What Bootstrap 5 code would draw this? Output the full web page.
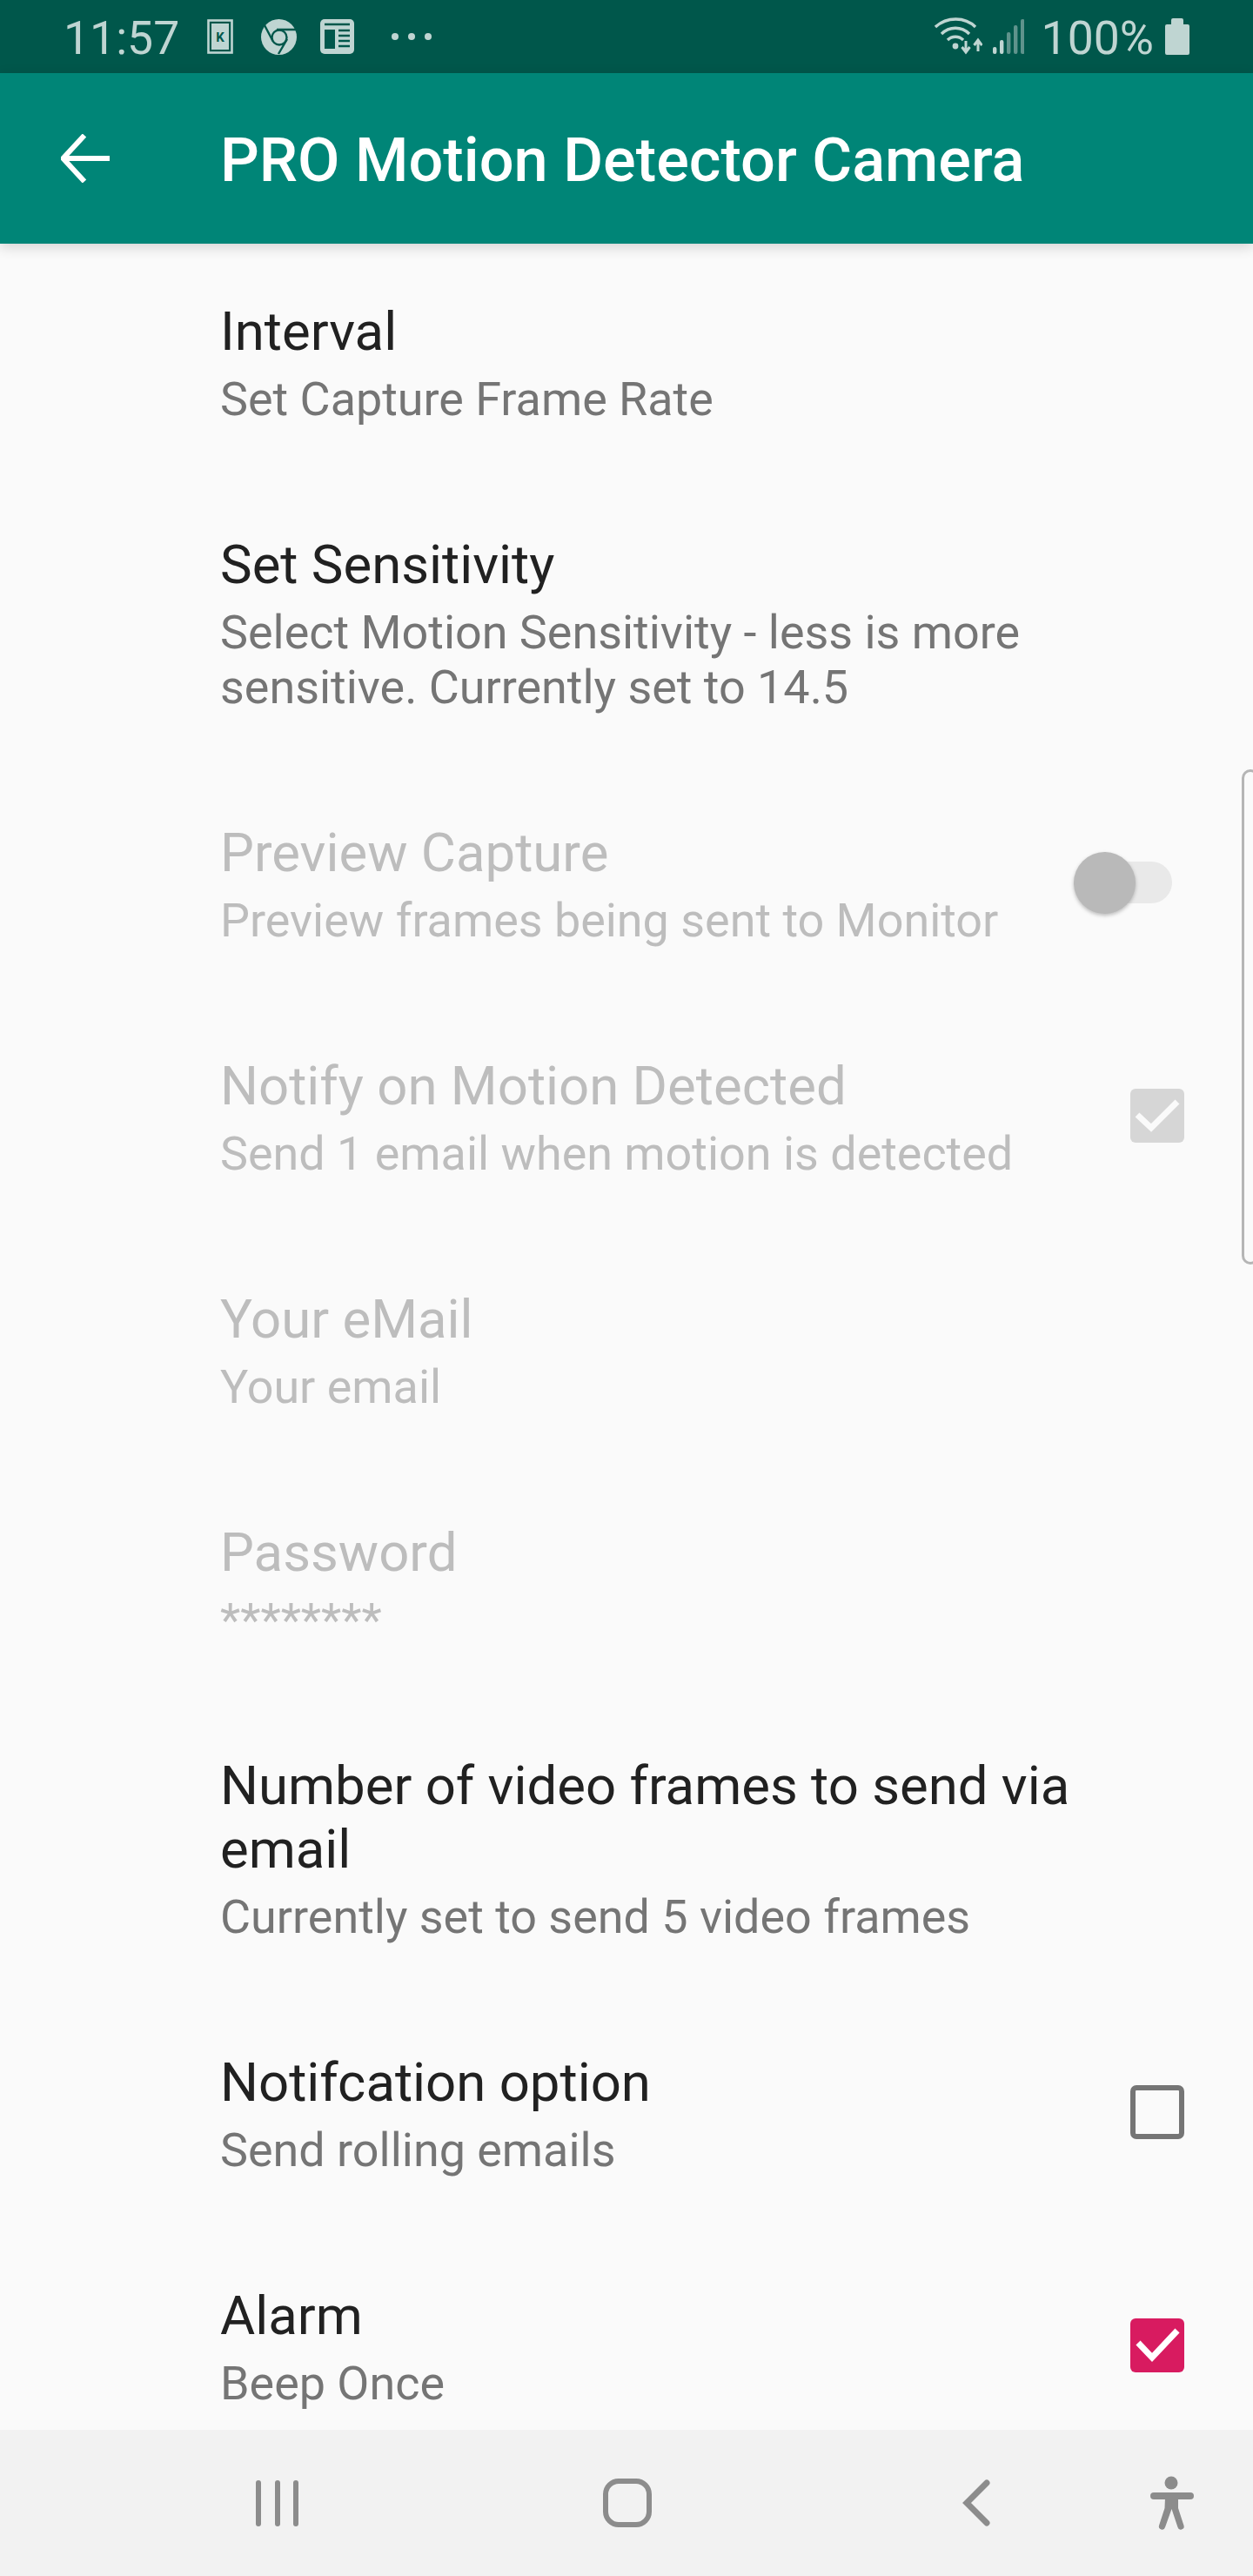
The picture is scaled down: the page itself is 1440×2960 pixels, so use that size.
<!DOCTYPE html>
<html lang="en">
<head>
    <meta charset="UTF-8">
    <title>PRO Motion Detector Camera</title>
    <link href="https://cdn.jsdelivr.net/npm/bootstrap@5.3.2/dist/css/bootstrap.min.css" rel="stylesheet">
    <style>
        body {
          background-color: #fafafa;
          font-family: Roboto, "Liberation Sans", sans-serif;
        }
        .phone-screen {
          height: 2960px;
        }
        .status-strip {
          height: 84px;
          background-color: #00574b;
          color: #bfd5d2;
          font-size: 53.5px;
          line-height: 84px;
          padding: 0 73px 0 73px;
        }
        .status-text {
          padding-top: 3px;
        }
        .status-k {
          margin-left: 32px;
        }
        .status-chrome {
          margin-left: 32px;
        }
        .status-news {
          margin-left: 27px;
        }
        .status-dots {
          margin-left: 42px;
        }
        .status-signal {
          margin-left: 12px;
          margin-right: 20px;
        }
        .status-battery {
          margin-left: 13px;
        }
        .app-strip {
          height: 196px;
          background-color: #008577;
          color: #fff;
          padding-left: 70px;
          box-shadow: 0 4px 14px rgba(0, 0, 0, .16);
          z-index: 2;
        }
        .app-name {
          font-size: 70.3px;
          font-weight: 500;
          line-height: 1;
          margin: 5px 0 0 127px;
        }
        .pref-scroll {
          height: 2512px;
          overflow: hidden;
          padding-top: 2px;
        }
        .pref-row {
          background: transparent;
          border: 0;
          padding: 63px 79px 60px 253px;
          border-radius: 0 !important;
        }
        .pref-text {
          width: 990px;
        }
        .pref-title {
          font-size: 61.7px;
          line-height: 73px;
          color: #212121;
          margin-bottom: 9px;
        }
        .pref-sub {
          font-size: 53.9px;
          line-height: 63px;
          color: #757575;
        }
        .pref-off .pref-title,
        .pref-off .pref-sub {
          color: #bdbdbd;
        }
        .pref-box {
          margin-bottom: 6px;
        }
        .toggle-track {
          width: 101px;
          height: 48px;
          margin-right: 14px;
          margin-bottom: 6px;
          border-radius: 24px;
          background-color: #e9e9e9;
          position: relative;
        }
        .toggle-thumb {
          position: absolute;
          left: -12px;
          top: -11px;
          width: 71px;
          height: 71px;
          border-radius: 50%;
          background-color: #b9b9b9;
          box-shadow: 0 2px 4px rgba(0, 0, 0, .25);
        }
        .edge-handle {
          position: absolute;
          left: 1427px;
          top: 884px;
          width: 20px;
          height: 569px;
          border: 3px solid #b5b5b5;
          border-radius: 16px;
        }
        .nav-strip {
          height: 168px;
          background-color: #f2f2f2;
        }
        .nav-strip svg {
          position: absolute;
          left: 0;
          top: 0;
        }
        .k-mark {
          font-family: Roboto, sans-serif;
          font-size: 15px;
          font-weight: 700;
        }
    </style>
</head>
<body>

<div class="phone-screen d-flex flex-column position-relative overflow-hidden">

    <div class="status-strip d-flex justify-content-between align-items-center">
        <div class="d-flex align-items-center">
            <span class="status-text">11:57</span>
            <!-- notification icons -->
            <svg class="status-k" width="30" height="40" viewBox="0 0 30 40">
                <rect x="1.5" y="1.5" width="27" height="37" fill="none" stroke="#bfd5d2" stroke-width="2.6"/>
                <rect x="5" y="5" width="20" height="30" fill="#bfd5d2"/>
                <text class="k-mark" x="15" y="25.5" text-anchor="middle" fill="#00574b">K</text>
            </svg>
            <svg class="status-chrome" width="41" height="41" viewBox="0 0 41 41">
                <circle cx="20.5" cy="20.5" r="20.5" fill="#bfd5d2"/>
                <circle cx="21" cy="21" r="8.5" fill="none" stroke="#00574b" stroke-width="2.4"/>
                <path d="M18 12h22M4 7l9.5 18M30 23L20 40" fill="none" stroke="#00574b" stroke-width="2.4"/>
            </svg>
            <svg class="status-news" width="39" height="40" viewBox="0 0 39 40">
                <rect width="39" height="40" rx="5" fill="#bfd5d2"/>
                <rect x="5" y="12" width="12" height="22" fill="#00574b"/>
                <path d="M5 6h29M21 13h13M21 19h13M21 25h13M21 31h13" stroke="#00574b" stroke-width="2.4"/>
            </svg>
            <svg class="status-dots" width="48" height="10" viewBox="0 0 48 10">
                <circle cx="5" cy="5" r="4" fill="#bfd5d2"/>
                <circle cx="24" cy="5" r="4" fill="#bfd5d2"/>
                <circle cx="43" cy="5" r="4" fill="#bfd5d2"/>
            </svg>
        </div>
        <div class="d-flex align-items-center">
            <svg width="55" height="44" viewBox="0 0 55 44">
                <path d="M1 11C14 -1 35 -1 47 11M8 19C17 10 31 10 40 19M15 26C20 21 28 21 33 26" fill="none" stroke="#bfd5d2" stroke-width="3.4"/>
                <circle cx="24" cy="33" r="3.4" fill="#bfd5d2"/>
                <path d="M36 27v12M31.5 34l4.5 6 4.5-6M50 39V27M45.5 32l4.5-6 4.5 6" fill="none" stroke="#bfd5d2" stroke-width="3"/>
            </svg>
            <svg class="status-signal" width="36" height="40" viewBox="0 0 36 40">
                <rect x="0" y="32" width="4.4" height="8" rx="2" fill="#bfd5d2"/>
                <rect x="8" y="24" width="4.4" height="16" rx="2" fill="#bfd5d2"/>
                <rect x="16" y="15" width="4.4" height="25" rx="2" fill="#5f938c"/>
                <rect x="24" y="7" width="4.4" height="33" rx="2" fill="#5f938c"/>
                <rect x="32" y="0" width="4.4" height="40" rx="2" fill="#5f938c"/>
            </svg>
            <span class="status-text">100%</span>
            <svg class="status-battery" width="28" height="42" viewBox="0 0 28 42">
                <path d="M7 7V2a2 2 0 0 1 2-2h10a2 2 0 0 1 2 2v5h5a2 2 0 0 1 2 2v31a2 2 0 0 1-2 2H2a2 2 0 0 1-2-2V9a2 2 0 0 1 2-2z" fill="#bfd5d2"/>
            </svg>
        </div>
    </div>

    <div class="app-strip d-flex align-items-center">
        <svg width="56" height="56" viewBox="0 0 56 56">
            <path d="M56 28H3M27 1.5L2.5 28 27 54.5" fill="none" stroke="#fff" stroke-width="6"/>
        </svg>
        <h1 class="app-name">PRO Motion Detector Camera</h1>
    </div>

    <div class="pref-scroll list-group list-group-flush d-block">
        <div class="pref-row list-group-item d-flex justify-content-between align-items-center">
            <div class="pref-text">
                <div class="pref-title">Interval</div>
                <div class="pref-sub">Set Capture Frame Rate</div>
            </div>
        </div>
        <div class="pref-row list-group-item d-flex justify-content-between align-items-center">
            <div class="pref-text">
                <div class="pref-title">Set Sensitivity</div>
                <div class="pref-sub">Select Motion Sensitivity - less is more sensitive. Currently set to 14.5</div>
            </div>
        </div>
        <div class="pref-row pref-off list-group-item d-flex justify-content-between align-items-center">
            <div class="pref-text">
                <div class="pref-title">Preview Capture</div>
                <div class="pref-sub">Preview frames being sent to Monitor</div>
            </div>
            <div class="toggle-track"><div class="toggle-thumb"></div></div>
        </div>
        <div class="pref-row pref-off list-group-item d-flex justify-content-between align-items-center">
            <div class="pref-text">
                <div class="pref-title">Notify on Motion Detected</div>
                <div class="pref-sub">Send 1 email when motion is detected</div>
            </div>
            <svg class="pref-box" width="62" height="62" viewBox="0 0 62 62">
                <rect width="62" height="62" rx="6" fill="#d6d6d6"/>
                <path d="M8 30l16 15L54 15" fill="none" stroke="#fafafa" stroke-width="7"/>
            </svg>
        </div>
        <div class="pref-row pref-off list-group-item d-flex justify-content-between align-items-center">
            <div class="pref-text">
                <div class="pref-title">Your eMail</div>
                <div class="pref-sub">Your email</div>
            </div>
        </div>
        <div class="pref-row pref-off list-group-item d-flex justify-content-between align-items-center">
            <div class="pref-text">
                <div class="pref-title">Password</div>
                <div class="pref-sub">********</div>
            </div>
        </div>
        <div class="pref-row list-group-item d-flex justify-content-between align-items-center">
            <div class="pref-text">
                <div class="pref-title">Number of video frames to send via email</div>
                <div class="pref-sub">Currently set to send 5 video frames</div>
            </div>
        </div>
        <div class="pref-row list-group-item d-flex justify-content-between align-items-center">
            <div class="pref-text">
                <div class="pref-title">Notifcation option</div>
                <div class="pref-sub">Send rolling emails</div>
            </div>
            <svg class="pref-box" width="62" height="62" viewBox="0 0 62 62">
                <rect x="3" y="3" width="56" height="56" rx="4" fill="none" stroke="#757575" stroke-width="6"/>
            </svg>
        </div>
        <div class="pref-row list-group-item d-flex justify-content-between align-items-center">
            <div class="pref-text">
                <div class="pref-title">Alarm</div>
                <div class="pref-sub">Beep Once</div>
            </div>
            <svg class="pref-box" width="62" height="62" viewBox="0 0 62 62">
                <rect width="62" height="62" rx="6" fill="#d81b60"/>
                <path d="M9 28l16 17L54 14" fill="none" stroke="#fff" stroke-width="7"/>
            </svg>
        </div>
    </div>

    <div class="edge-handle"></div>

    <div class="nav-strip position-relative z-3">
        <svg width="1440" height="168" viewBox="0 0 1440 168">
            <path d="M297 61v47M319 61v47M340 61v47" stroke="#8c8c8c" stroke-width="6" stroke-linecap="round"/>
            <rect x="696" y="59" width="50" height="50" rx="15" fill="none" stroke="#8c8c8c" stroke-width="6"/>
            <path d="M1134 61l-23 23 23 23" fill="none" stroke="#8c8c8c" stroke-width="7" stroke-linecap="round"/>
            <circle cx="1346" cy="61" r="7.5" fill="#8c8c8c"/>
            <path d="M1326 76h42" stroke="#8c8c8c" stroke-width="8" stroke-linecap="round"/>
            <path d="M1339 78h15v12l6.5 20a3.5 3.5 0 0 1-7 2l-7-21-7.500 21a3.500 3.500 0 0 1-7-2l6.500-20z" fill="#8c8c8c"/>
        </svg>
    </div>
</div>

<script src="https://cdn.jsdelivr.net/npm/bootstrap@5.3.2/dist/js/bootstrap.bundle.min.js"></script>
</body>
</html>
